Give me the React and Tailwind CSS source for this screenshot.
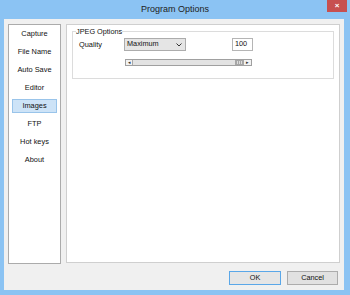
const PAGES = ['Capture', 'File Name', 'Auto Save', 'Editor', 'Images', 'FTP', 'Hot keys', 'About']

function ScrollBar() {
  return (
    <div className="flex h-[7px] w-[127px] border border-[#a0a0a0] bg-[#e3e3e3]">
      <div className="flex w-[7px] items-center justify-center border-r border-[#a8a8a8] bg-[#f2f2f2] text-[5px] leading-none text-[#333]">◂</div>
      <div className="flex-1" />
      <div className="flex w-[8px] items-center justify-center gap-[1px] bg-[#a6a6a6]">
        <span className="h-[3px] w-px bg-[#dcdcdc]" />
        <span className="h-[3px] w-px bg-[#dcdcdc]" />
        <span className="h-[3px] w-px bg-[#dcdcdc]" />
      </div>
      <div className="flex w-[8px] items-center justify-center border-l border-[#a8a8a8] bg-[#f2f2f2] text-[5px] leading-none text-[#333]">▸</div>
    </div>
  )
}

export default function App() {
  return (
    <div
      className="flex h-[295px] w-[350px] flex-col bg-[#8bc3f3] text-[#111]"
      style={{ fontFamily: '"Liberation Sans", Arial, sans-serif' }}
    >
      {/* title bar */}
      <div className="relative flex h-[19px] shrink-0 items-center justify-center">
        <span className="text-[9px] text-[#222]">Program Options</span>
        <div className="absolute right-[3px] top-0 flex h-[12px] w-[20px] items-center justify-center bg-[#c75050] text-[8px] font-bold leading-none text-white">
          ×
        </div>
      </div>

      {/* client area */}
      <div className="mb-[5px] ml-[4px] mr-[6px] flex flex-1 flex-col bg-[#f0f0f0] px-[4px] pt-[5px]">
        <div className="flex h-[240px] gap-[5px]">
          {/* page list */}
          <div className="flex w-[53px] flex-col gap-[4px] border border-[#ababab] bg-white px-[3px] pt-[2px]">
            {PAGES.map(p => (
              <div
                key={p}
                className={`flex h-[14px] items-center justify-center text-[7.4px] ${
                  p === 'Images' ? 'border border-[#99c4ea] bg-[#cde3f7]' : ''
                }`}
              >
                {p}
              </div>
            ))}
          </div>

          {/* options panel */}
          <div className="mb-[1px] flex-1 border border-[#cfcfcf] bg-white px-[5px] pt-[2px]">
            <fieldset className="h-[52px] border border-[#dcdcdc] pl-[6px]">
              <legend className="-ml-[3px] text-[7.3px] leading-[9px]">JPEG Options</legend>
              <div className="mt-[2px] flex h-[13px] items-center">
                <span className="w-[45px] text-[7.4px]">Quality</span>
                <div className="flex h-[13px] w-[62px] items-center justify-between border border-[#acacac] bg-[#e5e5e5] pl-[2px] pr-[3px] text-[7.3px]">
                  <span>Maximum</span>
                  <svg width="6" height="4" viewBox="0 0 6 4">
                    <path d="M0.5 0.5 L3 3 L5.5 0.5" fill="none" stroke="#333" strokeWidth="1" />
                  </svg>
                </div>
                <div className="ml-[46px] flex h-[13px] w-[21px] items-center border border-[#b5b5b5] bg-white pl-[2px] text-[7.3px]">
                  100
                </div>
              </div>
              <div className="mt-[8px] pl-[46px]">
                <ScrollBar />
              </div>
            </fieldset>
          </div>
        </div>

        {/* buttons */}
        <div className="mt-[7px] flex justify-end gap-[6px] pr-[2px]">
          <button className="flex h-[14px] w-[52px] items-center justify-center border border-[#5aa7e8] bg-[#e5e5e5] text-[7.3px]">
            OK
          </button>
          <button className="flex h-[14px] w-[51px] items-center justify-center border border-[#acacac] bg-[#e1e1e1] text-[7.3px]">
            Cancel
          </button>
        </div>
      </div>
    </div>
  )
}
